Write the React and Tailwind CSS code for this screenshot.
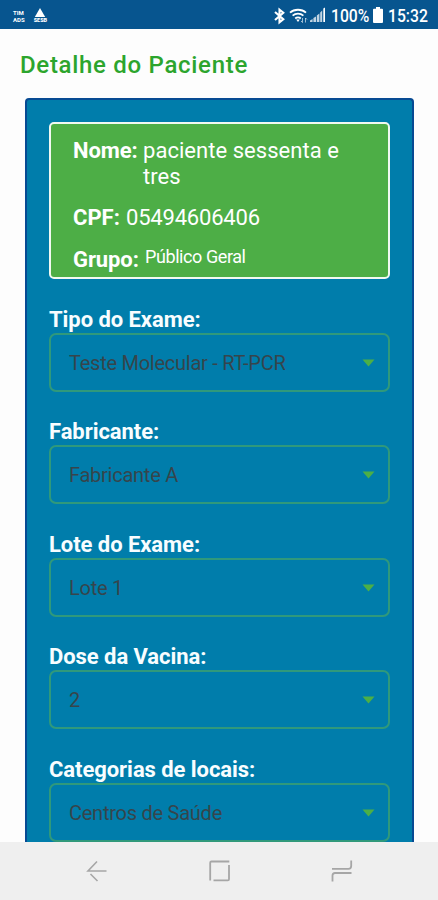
const paciente = {
  nome: "paciente sessenta e tres",
  cpf: "05494606406",
  grupo: "Público Geral",
};

const campos = [
  { label: "Tipo do Exame:", valor: "Teste Molecular - RT-PCR" },
  { label: "Fabricante:", valor: "Fabricante A" },
  { label: "Lote do Exame:", valor: "Lote 1" },
  { label: "Dose da Vacina:", valor: "2" },
  { label: "Categorias de locais:", valor: "Centros de Saúde" },
];

// Barra de status do Android
function StatusBar() {
  return (
    <header className="flex h-[29px] shrink-0 items-center bg-[#07558f] pl-[13px] pr-[9px] text-white">
      <div className="mt-[2px] flex flex-col text-[6px] font-bold leading-[7px]">
        <span>TIM</span>
        <span>ADS</span>
      </div>
      <div className="ml-[9px] mt-[2px] flex flex-col items-center">
        <svg width="12" height="9" viewBox="0 0 12 9" fill="currentColor">
          <path d="M6 0 11.2 9H.8z" />
        </svg>
        <span className="text-[5.5px] font-black leading-[6px]">SESB</span>
      </div>

      <div className="ml-auto flex items-center">
        <svg className="mt-[2px]" width="12" height="18" viewBox="0 0 12 18" fill="none" stroke="currentColor" strokeWidth="2.1">
          <path d="M1 5 9.300 12.300 5.500 15.300V2.700l3.800 3L1 13" />
        </svg>
        <svg className="ml-[3px] mt-[2px]" width="20" height="16" viewBox="0 0 20 16" fill="none" stroke="currentColor" strokeWidth="1.8">
          <path d="M1 4.6C5.300.8 12.7.8 17 4.600" />
          <path d="M3.600 7.600C6.700 4.900 11.300 4.900 14.400 7.600" />
          <path d="M6.200 10.500C8 9 10 9 11.800 10.500" />
          <path d="M7.200 11.500h3.600L9 14z" fill="currentColor" stroke="none" />
          <path d="M13.500 10v4.500l-1.500-1.500M16.500 14.500V10l1.500 1.500" strokeWidth="1" opacity=".6" />
        </svg>
        <svg className="ml-[1px]" width="16" height="16" viewBox="0 0 16 16" fill="currentColor">
          <path d="M0 15v-1.500L2.600 12v3zM3.400 15v-4L6 9.400V15zM6.800 15V8.600l2.600-2.200V15zM10.200 15V5.400l2-1.900V15z" opacity=".75" />
          <path d="M13.300 15V1.500l1.700-1V15z" />
        </svg>
        <span className="ml-[5px] mt-[2px] w-[39px] origin-left scale-x-[0.85] whitespace-nowrap text-[18.5px] font-medium leading-5">100%</span>
        <svg className="ml-[3px]" width="10" height="16" viewBox="0 0 10 16" fill="currentColor">
          <path d="M3 0h4v1.800h2q1 0 1 1V15q0 1-1 1H1q-1 0-1-1V2.800q0-1 1-1h2z" />
        </svg>
        <span className="ml-[5px] mt-[2px] w-[41px] origin-left scale-x-[0.85] whitespace-nowrap text-[18.5px] font-medium leading-5">15:32</span>
      </div>
    </header>
  );
}

function DadosPaciente() {
  return (
    <section className="h-[157px] rounded-[5px] border-2 border-[#f1f9f1] bg-[#4dae46] pl-[22px] pt-[14px] text-[22px] leading-[26px] text-white">
      <div className="flex">
        <b className="w-[70px] shrink-0 tracking-[-0.1px]">Nome:</b>
        <span className="w-[210px] tracking-[0.04px]">{paciente.nome}</span>
      </div>
      <div className="mt-[15px] flex">
        <b className="w-[53px] shrink-0">CPF:</b>
        <span className="tracking-[-0.2px]">{paciente.cpf}</span>
      </div>
      <div className="mt-[16px] flex">
        <b className="w-[72px] shrink-0 tracking-[-0.1px]">Grupo:</b>
        <span className="-mt-[3px] text-[18px] tracking-[-0.42px]">{paciente.grupo}</span>
      </div>
    </section>
  );
}

function CampoSelect({ label, valor }) {
  return (
    <div className="flex h-[112.5px] shrink-0 flex-col">
      <label className="h-[26px] whitespace-nowrap text-[22px] font-bold leading-[26px] tracking-[-0.06px] text-[#f8fdff]">{label}</label>
      <button className="flex h-[59px] items-center justify-between rounded-[7px] border-2 border-[#30997b] pl-[18px] pr-[13px] text-[20px] text-[#36454c]">
        <span className="mt-px tracking-[-0.25px]">{valor}</span>
        <svg className="mt-px" width="13" height="8" viewBox="0 0 13 8" fill="#4caf46">
          <path d="M.5.500h12L6.500 7.500z" />
        </svg>
      </button>
    </div>
  );
}

// Botões de navegação do sistema
function NavBar() {
  return (
    <nav className="flex h-[58px] shrink-0 items-center justify-between bg-[#efefef] pl-[86px] pr-[85px] text-[#a6a6a6]">
      <svg width="22" height="22" viewBox="0 0 22 22" fill="none" stroke="currentColor" strokeWidth="1.6">
        <path d="M20.500 11H2L11 1.500M4.500 14 11.500 21" />
      </svg>
      <svg width="22" height="22" viewBox="0 0 22 22" fill="none" stroke="currentColor" strokeWidth="1.8">
        <path d="M20.300 1.500H2.500Q1.200 1.500 1.200 2.700V20.500M4.500 20.300H18.800Q20 20.300 20 19.200V5" />
      </svg>
      <svg width="22" height="22" viewBox="0 0 22 22" fill="none" stroke="currentColor" strokeWidth="1.8">
        <path d="M1 8.800H17.500Q20.200 8.800 20.200 6V.5M20.500 13H4Q1.500 13 1.500 15.500V21.500" />
      </svg>
    </nav>
  );
}

export default function App() {
  return (
    <div className="flex h-[900px] w-[438px] flex-col overflow-hidden bg-[#fdfdfd] font-[Roboto,sans-serif]">
      <StatusBar />
      <main className="flex min-h-0 flex-1 flex-col overflow-hidden">
        <h1 className="ml-5 mt-[20px] h-[32px] text-[24px] font-medium leading-[32px] tracking-[0.7px] text-[#2ca52d]">
          Detalhe do Paciente
        </h1>
        <div className="ml-[25px] mt-[17px] w-[389px] rounded-t-[4px] border-2 border-b-0 border-[#074a93] bg-[#007dab] px-[22px] pt-[22px]">
          <DadosPaciente />
          <div className="mt-[27.5px] flex flex-col">
            {campos.map((campo) => (
              <CampoSelect key={campo.label} {...campo} />
            ))}
          </div>
        </div>
      </main>
      <NavBar />
    </div>
  );
}
